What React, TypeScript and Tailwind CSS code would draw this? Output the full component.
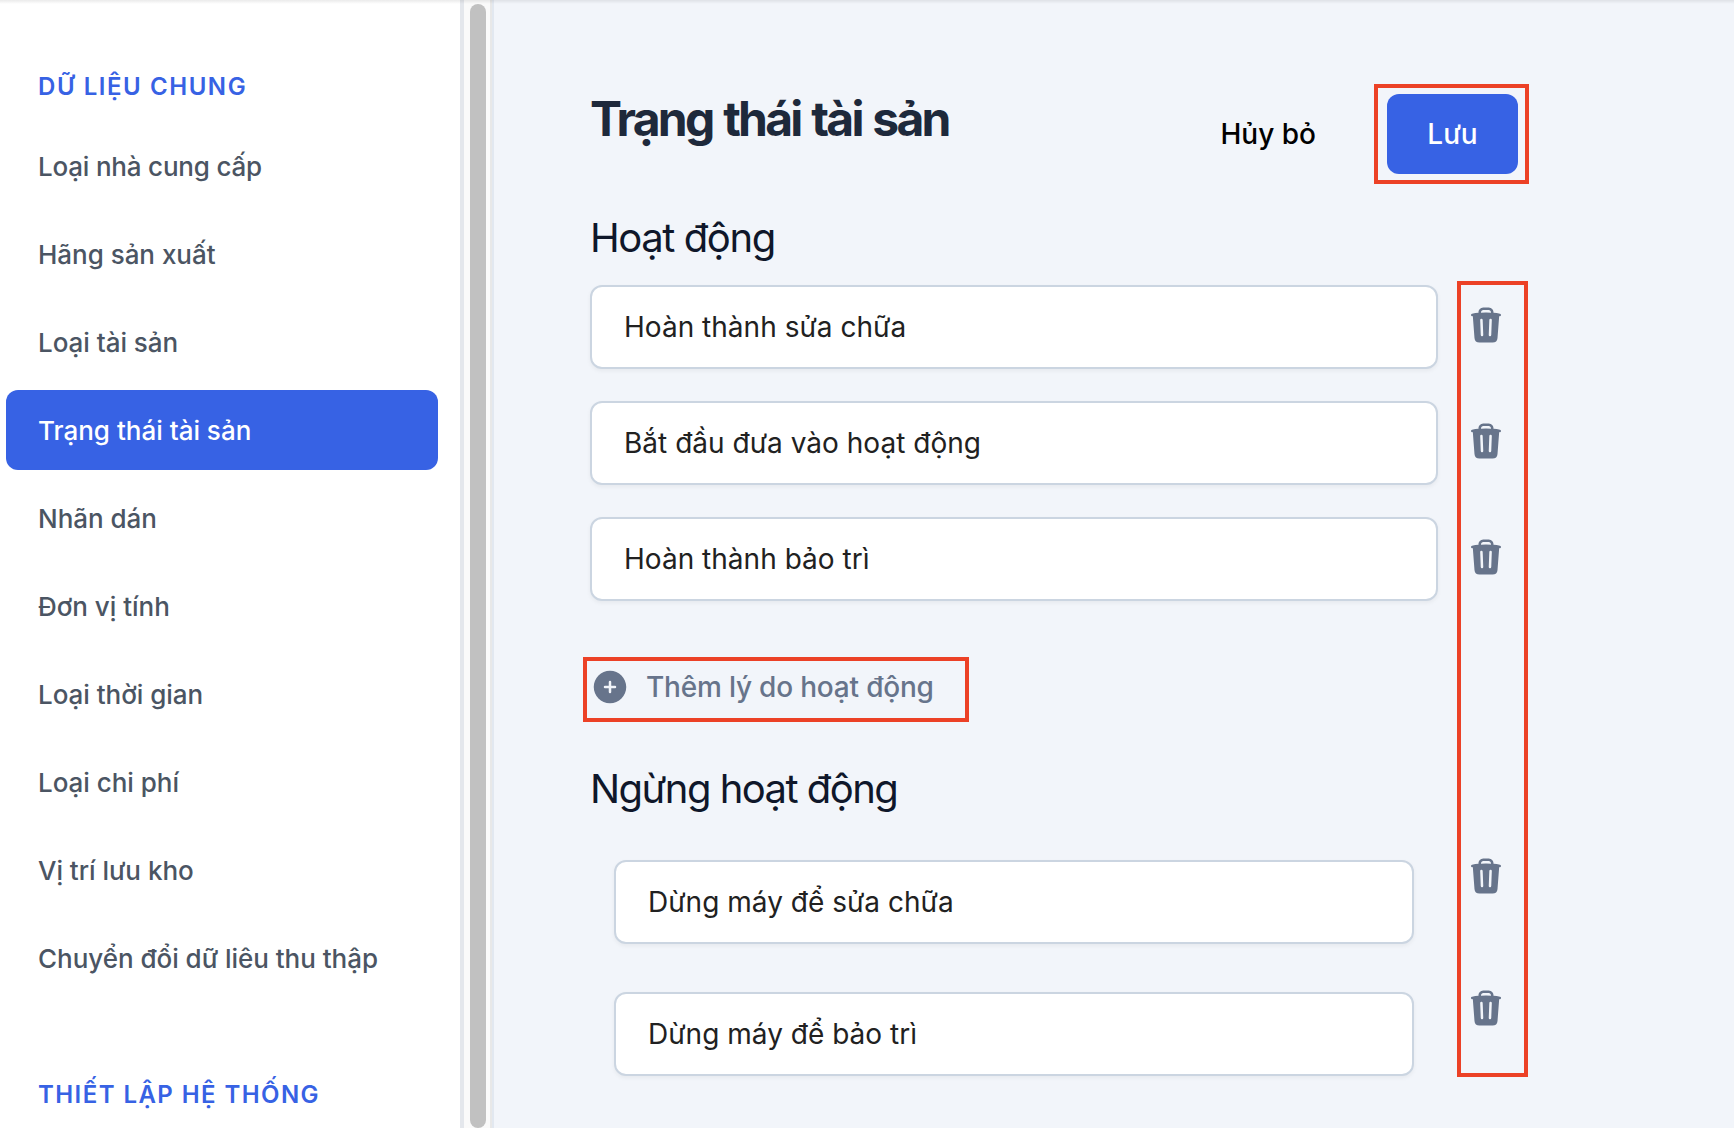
import { HiPlusCircle, HiTrash } from "react-icons/hi2";

const navItems: { label: string; active?: boolean }[] = [
  { label: "Loại nhà cung cấp" },
  { label: "Hãng sản xuất" },
  { label: "Loại tài sản" },
  { label: "Trạng thái tài sản", active: true },
  { label: "Nhãn dán" },
  { label: "Đơn vị tính" },
  { label: "Loại thời gian" },
  { label: "Loại chi phí" },
  { label: "Vị trí lưu kho" },
  { label: "Chuyển đổi dữ liêu thu thập" },
];

const activeReasons = ["Hoàn thành sửa chữa", "Bắt đầu đưa vào hoạt động", "Hoàn thành bảo trì"];
const inactiveReasons = ["Dừng máy để sửa chữa", "Dừng máy để bảo trì"];

function Sidebar() {
  return (
    <aside className="flex w-[464px] shrink-0 flex-col border-r-4 border-[#e4e7ec] bg-white pl-1.5 pr-[22px] pt-[72px]">
      <h3 className="h-[30px] whitespace-nowrap pl-8 text-2xl font-semibold leading-[30px] tracking-[1.56px] text-[#3762e4]">
        DỮ LIỆU CHUNG
      </h3>
      <nav className="mt-6 flex flex-col gap-2">
        {navItems.map((item) => (
          <a
            key={item.label}
            className={
              item.active
                ? "flex h-20 items-center whitespace-nowrap rounded-xl bg-[#3762e4] pl-8 text-[26px] font-medium text-white"
                : "flex h-20 items-center whitespace-nowrap rounded-xl pl-8 text-[26px] font-medium tracking-[-0.03px] text-[#4b5563] first:tracking-[-0.2px]"
            }
          >
            {item.label}
          </a>
        ))}
      </nav>
      <h3 className="mt-[82px] h-[30px] whitespace-nowrap pl-8 text-2xl font-semibold leading-[30px] tracking-[1.43px] text-[#3762e4]">
        THIẾT LẬP HỆ THỐNG
      </h3>
    </aside>
  );
}

function ScrollBar() {
  return (
    <div className="flex w-7 shrink-0 border-r-2 border-[#e8e8e8] bg-[#fafafa] pl-1.5 pt-1">
      <div className="h-[1124px] w-4 rounded-full bg-[#c1c1c1]" />
    </div>
  );
}

function TextField({ value }: { value: string }) {
  return (
    <input
      defaultValue={value}
      className="h-[84px] min-w-0 flex-1 rounded-xl border-2 border-[#cbd5e1] bg-white px-8 text-[28px] tracking-[0.02px] text-[#212121] shadow-[0_2px_4px_rgba(0,0,0,0.05)] outline-none"
    />
  );
}

export default function App() {
  return (
    <div className="relative flex h-[1128px] w-[1734px] overflow-hidden bg-[#f2f5fa] font-[Inter,sans-serif]">
      <Sidebar />
      <ScrollBar />
      <main className="flex-1 border-l-2 border-[#e2e8f0] pl-24 pt-[94px]">
        <div className="w-[928px]">
          <header className="flex h-20 items-start justify-between">
            <h1 className="whitespace-nowrap text-5xl font-bold leading-[50px] tracking-[-2.75px] text-[#1e293b] [word-spacing:2px]">
              Trạng thái tài sản
            </h1>
            <div className="flex">
              <button className="h-20 px-10 text-[28px] font-medium text-black">Hủy bỏ</button>
              <div className="relative ml-[31px]">
                <button className="h-20 w-[131px] rounded-xl bg-[#3762e4] text-[28px] font-medium text-white">
                  Lưu
                </button>
                <div className="pointer-events-none absolute -inset-y-2.5 -left-[13px] -right-[11px] border-4 border-[#ec4126]" />
              </div>
            </div>
          </header>

          <div className="relative">
            <h2 className="mt-10 h-12 text-[40px] leading-[48px] tracking-[-1.42px] text-[#0f172a]">Hoạt động</h2>
            <div className="mt-[23px] flex flex-col gap-8">
              {activeReasons.map((reason) => (
                <div key={reason} className="flex items-start gap-4">
                  <TextField value={reason} />
                  <button className="mt-[19.5px] flex w-16 justify-start pl-3 text-[#67748b]">
                    <HiTrash size={40} />
                  </button>
                </div>
              ))}
            </div>

            <div className="relative mt-[66px] flex h-10 items-center gap-4 text-[#67748b]">
              <HiPlusCircle size={40} />
              <span className="text-[28px] font-medium tracking-[-0.2px]">Thêm lý do hoạt động</span>
              <div className="pointer-events-none absolute -left-[7px] -top-2.5 h-[65px] w-[386px] border-4 border-[#ec4126]" />
            </div>

            <h2 className="mt-[58px] h-12 text-[40px] leading-[48px] tracking-[-1.54px] text-[#0f172a]">
              Ngừng hoạt động
            </h2>
            <div className="mt-[47px] flex flex-col gap-12 pl-6">
              {inactiveReasons.map((reason) => (
                <div key={reason} className="flex items-start gap-10">
                  <TextField value={reason} />
                  <button className="-mt-[4.5px] flex w-16 justify-start pl-3 text-[#67748b]">
                    <HiTrash size={40} />
                  </button>
                </div>
              ))}
            </div>
            <div className="pointer-events-none absolute -right-2.5 top-[67px] h-[796px] w-[71px] border-4 border-[#ec4126]" />
          </div>
        </div>
      </main>
      <div className="pointer-events-none absolute inset-x-0 top-0 h-1 bg-gradient-to-b from-black/8 to-transparent" />
    </div>
  );
}
